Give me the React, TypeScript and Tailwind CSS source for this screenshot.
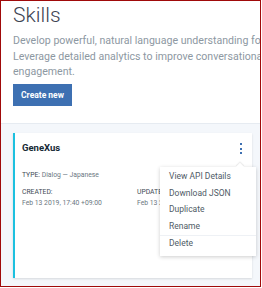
import { useState } from 'react';

const menuItems = ['View API Details', 'Download JSON', 'Duplicate', 'Rename'];

export default function App() {
  const [open] = useState(true);

  return (
    <div className="w-[262px] h-[288px] bg-white overflow-hidden" style={{ fontFamily: 'Roboto, "Noto Sans", sans-serif' }}>
      <div className="w-[261px] h-[287px] border border-[#a00a0a] overflow-hidden flex flex-col">
        {/* Header */}
        <div className="h-[122px] px-3">
          <h1 className="text-[21px] font-light leading-[28px] text-[#3d4452]">Skills</h1>
          <p className="mt-[4px] w-[400px] text-[10.6px] leading-[15.5px] text-[#8d98a2]">
            Develop powerful, natural language understanding for your bots.
            <br />
            Leverage detailed analytics to improve conversational
            <br />
            engagement.
          </p>
          <button className="mt-[4.5px] h-[22px] w-[59px] bg-[#3d70b2] text-white text-[8.5px] font-bold">
            Create new
          </button>
        </div>

        {/* Skill list */}
        <div className="flex-1 bg-[#f4f7fb] border-t border-[#e6ebf1] px-3 pt-[9px]">
          <div className="relative w-[239px] h-[145px] bg-white border-l-2 border-[#1cc0df] shadow-[0_1px_2px_rgba(0,0,0,0.12)]">
            <div className="flex items-start justify-between pl-[7px] pr-[10px] pt-[8px]">
              <h3 className="text-[9.5px] font-bold text-[#152935] leading-[14px]">GeneXus</h3>
              <button className="flex flex-col gap-[2.5px] pt-[2px]">
                <span className="w-[2px] h-[2px] bg-[#3d70b2]" />
                <span className="w-[2px] h-[2px] bg-[#3d70b2]" />
                <span className="w-[2px] h-[2px] bg-[#3d70b2]" />
              </button>
            </div>

            <div className="pl-[7px] mt-[14.5px] text-[6.8px] leading-[10px] text-[#6b7782]">
              <span className="text-[#3e4a55]">TYPE: </span>Dialog — Japanese
            </div>

            <div className="pl-[7px] mt-[7px] flex text-[6.8px] leading-[10px]">
              <div className="w-[115px]">
                <div className="text-[#3e4a55]">CREATED:</div>
                <div className="mt-[1.6px] text-[#6b7782]">Feb 13 2019, 17:40 +09:00</div>
              </div>
              <div>
                <div className="text-[#3e4a55]">UPDATED:</div>
                <div className="mt-[1.6px] text-[#6b7782]">Feb 13 2019, 17:40 +09:00</div>
              </div>
            </div>

            {open && (
              <div className="absolute left-[145px] top-[34px] w-[96px] bg-white shadow-[0_1px_4px_rgba(0,0,0,0.2)] pt-[1px] pb-[4.5px]">
                <div className="absolute -top-[3px] right-[13px] w-[6px] h-[6px] bg-white rotate-45 shadow-[-1px_-1px_1px_rgba(0,0,0,0.08)]" />
                {menuItems.map((item) => (
                  <div key={item} className="relative h-[16.7px] flex items-center pl-[9px] text-[8.5px] text-[#4f5b66]">
                    {item}
                  </div>
                ))}
                <div className="border-t border-[#eef1f5] h-[17px] flex items-center pl-[9px] text-[8.5px] text-[#4f5b66]">
                  Delete
                </div>
              </div>
            )}
          </div>
        </div>
      </div>
    </div>
  );
}
